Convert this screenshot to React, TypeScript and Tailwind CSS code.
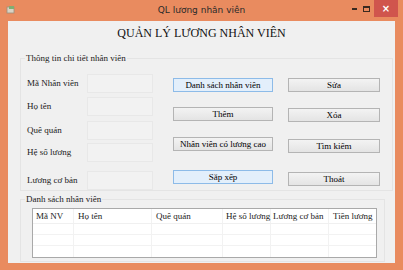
import type { ReactNode } from 'react';

const serif = { fontFamily: '"Liberation Serif", "Times New Roman", serif' };

function WinButton({ children, active, className = '' }: { children: ReactNode; active?: boolean; className?: string }) {
  const tone = active
    ? 'border-[#8dbbe8] bg-[#e3effb]'
    : 'border-[#b4b4b4] bg-gradient-to-b from-[#f3f3f3] to-[#e4e4e4]';
  return (
    <div className={`flex h-[14px] items-center justify-center border text-[9px] leading-none text-black ${tone} ${className}`}>
      {children}
    </div>
  );
}

function Field({ label, className = '' }: { label: string; className?: string }) {
  return (
    <div className={`flex h-[20px] items-center ${className}`}>
      <div className="w-[60px] text-[9px] leading-none text-[#1a1a1a]">{label}</div>
      <div className="h-[19px] w-[66px] border border-[#e8e8e8] bg-[#f2f2f2]" />
    </div>
  );
}

const columns = [
  { name: 'Mã NV', w: 'w-[41px]', pl: 'pl-[3px]' },
  { name: 'Họ tên', w: 'w-[78px]', pl: 'pl-[4px]' },
  { name: 'Quê quán', w: 'w-[71px]', pl: 'pl-[4px]' },
  { name: 'Hệ số lương', w: 'w-[48px]', pl: 'pl-[3px]' },
  { name: 'Lương cơ bản', w: 'w-[58px]', pl: 'pl-[2px]' },
  { name: 'Tiền lương', w: 'flex-1', pl: 'pl-[4px]' },
];

export default function App() {
  return (
    <div className="flex h-[270px] w-[403px] flex-col bg-[#e98b5f]" style={serif}>
      {/* title bar */}
      <div className="relative flex h-[21px] items-center justify-center">
        <svg className="absolute left-[6px] top-[5px]" width="10" height="10" viewBox="0 0 10 10">
          <rect x="1" y="2" width="7" height="6" fill="#d9d2c4" stroke="#9b8f7c" strokeWidth="0.8" />
          <rect x="3" y="1" width="5" height="3" fill="#7fae72" />
        </svg>
        <span className="text-[9px] text-[#2a2a2a]" style={{ fontFamily: '"DejaVu Sans", "Liberation Sans", sans-serif' }}>
          QL lương nhân viên
        </span>
        <div className="absolute right-[5px] top-0 flex h-[17px] items-center">
          <div className="flex h-full w-[12px] items-center justify-center">
            <div className="h-[2px] w-[5px] bg-[#3a2a20]" />
          </div>
          <div className="flex h-full w-[12px] items-center justify-center">
            <div className="h-[6px] w-[7px] border border-t-2 border-[#3a2a20]" />
          </div>
          <div className="ml-[2px] flex h-full w-[24px] items-center justify-center bg-[#d0554d] text-[10px] font-bold leading-none text-white" style={{ fontFamily: '"DejaVu Sans", sans-serif' }}>
            ×
          </div>
        </div>
      </div>

      {/* client */}
      <div className="mx-[8px] mb-[7px] flex flex-1 flex-col bg-[#f0f0f0]">
        <div className="flex h-[24px] items-center justify-center text-[12px] leading-none text-[#111]">
          QUẢN LÝ LƯƠNG NHÂN VIÊN
        </div>

        <fieldset className="ml-[12px] mt-[7px] h-[139px] w-[373px] border border-[#e4e4e4]">
          <legend className="ml-[4px] px-[1px] text-[9px] leading-[12px] text-[#1a1a1a]">Thông tin chi tiết nhân viên</legend>
          <div className="flex items-start">
            <div className="ml-[6px] mt-[9px] flex flex-col">
              <Field label="Mã Nhân viên" />
              <Field label="Họ tên" className="mt-[3px]" />
              <Field label="Quê quán" className="mt-[4px]" />
              <Field label="Hệ số lương" className="mt-[2px]" />
              <Field label="Lương cơ bản" className="mt-[8px]" />
            </div>
            <div className="ml-[20px] mt-[14px] flex flex-col">
              <WinButton active className="w-[100px]">Danh sách nhân viên</WinButton>
              <WinButton className="mt-[15px] w-[100px]">Thêm</WinButton>
              <WinButton className="mt-[16px] w-[100px]">Nhân viên có lương cao</WinButton>
              <WinButton active className="mt-[19px] w-[100px]">Sắp xếp</WinButton>
            </div>
            <div className="ml-[15px] mt-[14px] flex flex-col">
              <WinButton className="w-[92px]">Sửa</WinButton>
              <WinButton className="mt-[16px] w-[92px]">Xóa</WinButton>
              <WinButton className="mt-[17px] w-[92px]">Tìm kiếm</WinButton>
              <WinButton className="mt-[19px] w-[92px]">Thoát</WinButton>
            </div>
          </div>
        </fieldset>

        <fieldset className="ml-[12px] mt-[2px] h-[69px] w-[365px] border border-[#e4e4e4]">
          <legend className="ml-[4px] px-[1px] text-[9px] leading-[12px] text-[#1a1a1a]">Danh sách nhân viên</legend>
          <div className="ml-[11px] mt-[3px] flex h-[50px] w-[345px] flex-col border border-[#a9a9a9] bg-white">
            <div className="flex h-[15px] border-b border-[#f0f0f0]">
              {columns.map((c) => (
                <div key={c.name} className={`flex items-center whitespace-nowrap border-r border-[#f2f2f2] ${c.w} ${c.pl} text-[9px] leading-none text-[#222] last:border-r-0`}>
                  {c.name}
                </div>
              ))}
            </div>
            {[0, 1, 2].map((r) => (
              <div key={r} className="flex h-[11px] border-b border-[#f2f2f2] last:border-b-0">
                {columns.map((c) => (
                  <div key={c.name} className={`border-r border-[#f2f2f2] ${c.w} last:border-r-0`} />
                ))}
              </div>
            ))}
          </div>
        </fieldset>
      </div>
    </div>
  );
}
